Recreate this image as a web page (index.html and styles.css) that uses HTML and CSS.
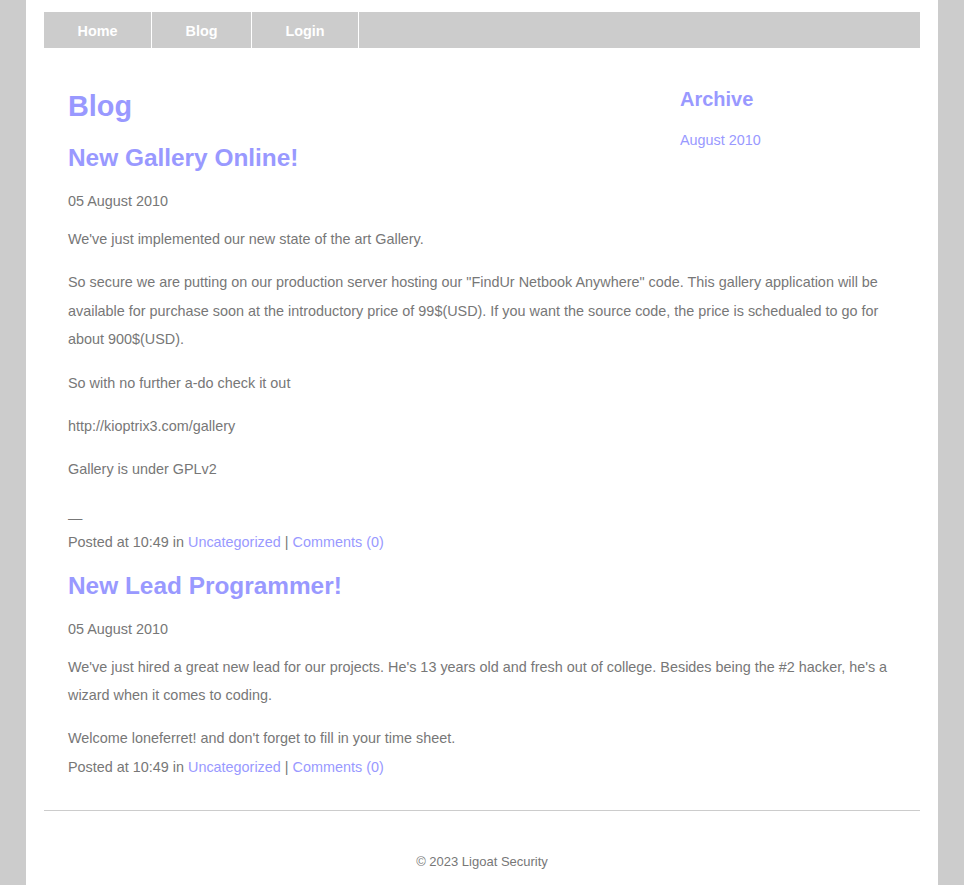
FILE: index.html
```html
<!DOCTYPE html>
<html lang="en">
<head>
<meta charset="utf-8">
<title>Blog - Ligoat Security</title>
<link rel="stylesheet" href="styles.css">
</head>
<body>
<div class="page">
  <nav class="nav">
    <a href="#" class="nav-item">Home</a>
    <a href="#" class="nav-item">Blog</a>
    <a href="#" class="nav-item">Login</a>
  </nav>
  <div class="main">
    <aside class="sidebar">
      <h3 class="side-title">Archive</h3>
      <a href="#" class="side-link">August 2010</a>
    </aside>
    <h1 class="page-title">Blog</h1>
    <article class="post">
      <h2 class="post-title">New Gallery Online!</h2>
      <div class="post-date">05 August 2010</div>
      <p class="para">We've just implemented our new state of the art Gallery.</p>
      <p class="para">So secure we are putting on our production server hosting our "FindUr Netbook Anywhere" code. This gallery application will be available for purchase soon at the introductory price of 99$(USD). If you want the source code, the price is schedualed to go for about 900$(USD).</p>
      <p class="para">So with no further a-do check it out</p>
      <p class="para">http://kioptrix3.com/gallery</p>
      <p class="para">Gallery is under GPLv2</p>
      <div class="dash">—</div>
      <div class="posted">Posted at 10:49 in <a href="#" class="link">Uncategorized</a> | <a href="#" class="link">Comments (0)</a></div>
    </article>
    <article class="post">
      <h2 class="post-title">New Lead Programmer!</h2>
      <div class="post-date">05 August 2010</div>
      <p class="para">We've just hired a great new lead for our projects. He's 13 years old and fresh out of college. Besides being the #2 hacker, he's a wizard when it comes to coding.</p>
      <p class="para flush">Welcome loneferret! and don't forget to fill in your time sheet.</p>
      <div class="posted">Posted at 10:49 in <a href="#" class="link">Uncategorized</a> | <a href="#" class="link">Comments (0)</a></div>
    </article>
  </div>
  <hr class="rule">
  <footer class="footer">© 2023 Ligoat Security</footer>
</div>
</body>
</html>
```
FILE: styles.css
```css
html, body {
  margin: 0;
  padding: 0;
}
body {
  background: #cccccc;
  font-family: "Liberation Sans", Arial, sans-serif;
  color: #777777;
}
.page {
  width: 912px;
  min-height: 100vh;
  margin: 0 auto;
  background: #ffffff;
  padding: 12px 18px 0;
  box-sizing: border-box;
}
.nav {
  display: flex;
  background: #cccccc;
  height: 36px;
  overflow: hidden;
}
.nav-item {
  display: block;
  padding: 1px 33.5px 0;
  line-height: 36px;
  font-size: 14.4px;
  font-weight: bold;
  color: #ffffff;
  text-decoration: none;
  border-right: 1px solid #ffffff;
}
.main {
  padding: 42px 24px 0;
  font-size: 14.4px;
  line-height: 28.8px;
}
.main::after {
  content: "";
  display: block;
  clear: both;
}
.sidebar {
  float: right;
  width: 216px;
}
.side-title {
  margin: 0 0 18px;
  font-size: 20px;
  line-height: 18px;
  font-weight: bold;
  color: #9999ff;
}
.side-link {
  color: #9999ff;
  text-decoration: none;
}
.page-title {
  margin: 0 0 22px;
  font-size: 28.8px;
  line-height: 32px;
  font-weight: bold;
  color: #9999ff;
}
.post-title {
  margin: 15px 0 15px;
  font-size: 24.4px;
  line-height: 28px;
  font-weight: bold;
  color: #9999ff;
}
.post-date {
  margin-bottom: 9px;
}
.para {
  margin: 0 0 14.3px;
}
.para.flush {
  margin-bottom: 0;
}
.dash {
  margin-top: 25.4px;
  line-height: 19px;
}
.link {
  color: #9999ff;
  text-decoration: none;
}
.rule {
  border: 0;
  border-top: 1px solid #cccccc;
  margin: 28px 0 0;
  height: 0;
}
.footer {
  padding-top: 43px;
  font-size: 13px;
  line-height: 16px;
  text-align: center;
}
```
